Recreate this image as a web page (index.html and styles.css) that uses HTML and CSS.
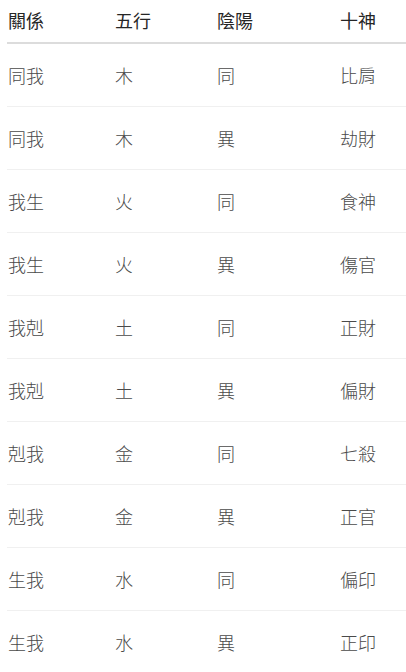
FILE: index.html
```html
<!DOCTYPE html>
<html lang="zh-Hant">
<head>
<meta charset="utf-8">
<link rel="stylesheet" href="styles.css">
</head>
<body>
<table class="gods">
  <colgroup>
    <col class="c1"><col class="c2"><col class="c3"><col class="c4">
  </colgroup>
  <thead>
    <tr><th>關係</th><th>五行</th><th>陰陽</th><th>十神</th></tr>
  </thead>
  <tbody>
    <tr><td>同我</td><td>木</td><td>同</td><td>比肩</td></tr>
    <tr><td>同我</td><td>木</td><td>異</td><td>劫財</td></tr>
    <tr><td>我生</td><td>火</td><td>同</td><td>食神</td></tr>
    <tr><td>我生</td><td>火</td><td>異</td><td>傷官</td></tr>
    <tr><td>我剋</td><td>土</td><td>同</td><td>正財</td></tr>
    <tr><td>我剋</td><td>土</td><td>異</td><td>偏財</td></tr>
    <tr><td>剋我</td><td>金</td><td>同</td><td>七殺</td></tr>
    <tr><td>剋我</td><td>金</td><td>異</td><td>正官</td></tr>
    <tr><td>生我</td><td>水</td><td>同</td><td>偏印</td></tr>
    <tr><td>生我</td><td>水</td><td>異</td><td>正印</td></tr>
  </tbody>
</table>
</body>
</html>
```

FILE: styles.css
```css
html, body {
  margin: 0;
  padding: 0;
  background: #ffffff;
}
body {
  font-family: "Noto Sans CJK TC", "Noto Sans", sans-serif;
  font-size: 18px;
  color: #4a4a4a;
  overflow: hidden;
}
.gods {
  border-collapse: collapse;
  table-layout: fixed;
  width: 399px;
  margin-left: 7px;
}
.c1 { width: 107px; }
.c2 { width: 102px; }
.c3 { width: 123px; }
.c4 { width: 67px; }
.gods th,
.gods td {
  text-align: left;
  padding: 0 0 0 1px;
  line-height: 24px;
}
.gods th {
  font-weight: 400;
  color: #262626;
  padding-top: 8px;
  padding-bottom: 10px;
  border-bottom: 2px solid #dcdcdc;
}
.gods td {
  font-weight: 300;
  padding-top: 19px;
  padding-bottom: 19px;
  border-bottom: 1px solid #f0f0f0;
}
.gods tbody tr:last-child td {
  border-bottom: none;
}
```
